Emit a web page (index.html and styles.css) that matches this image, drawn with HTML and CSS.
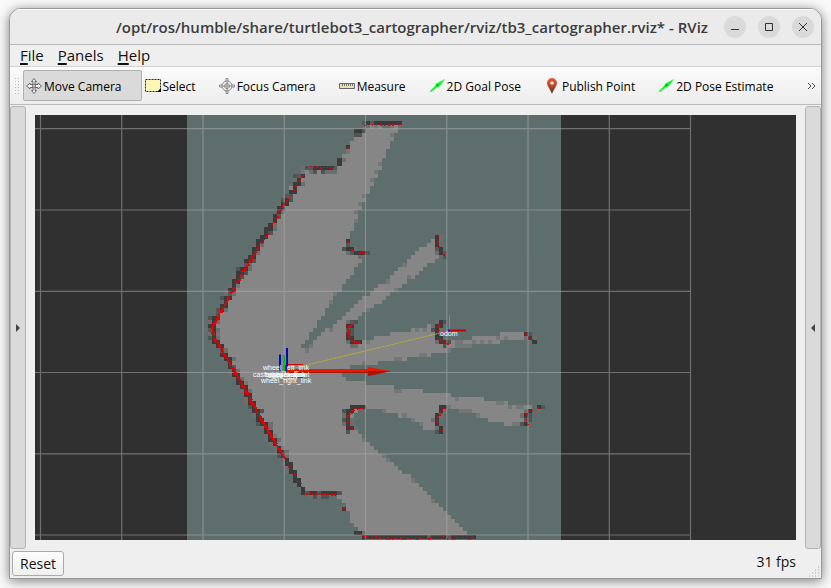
FILE: index.html
```
<!DOCTYPE html>
<html lang="en">
<head>
<meta charset="utf-8">
<title>tb3_cartographer.rviz* - RViz</title>
<link rel="stylesheet" href="styles.css">
</head>
<body>
<div class="window">
  <header class="titlebar">
    <h1 class="title">/opt/ros/humble/share/turtlebot3_cartographer/rviz/tb3_cartographer.rviz* - RViz</h1>
    <div class="controls">
      <button class="control" aria-label="Minimize"><svg viewBox="0 0 22 22"><path d="M7 13.5h8"/></svg></button>
      <button class="control" aria-label="Maximize"><svg viewBox="0 0 22 22"><path d="M7.5 7.5h7v7h-7z"/></svg></button>
      <button class="control" aria-label="Close"><svg viewBox="0 0 22 22"><path d="M7 7l8 8M15 7l-8 8"/></svg></button>
    </div>
  </header>
  <nav class="menubar">
    <button class="menu"><u>F</u>ile</button>
    <button class="menu"><u>P</u>anels</button>
    <button class="menu"><u>H</u>elp</button>
  </nav>
  <div class="toolbar">
    <span class="grip"></span>
    <button class="tool active">
      <svg class="icon" viewBox="0 0 16 16"><path d="M8 .5l2.500 3H9v3h3V5l3.500 3-3.500 3V9.500H9v3h1.500L8 15.500l-2.500-3H7v-3H4V11L.5 8 4 5v1.500h3v-3H5.500z" fill="#f4f4f4" stroke="#666"/><circle cx="8" cy="8" r="1.500" fill="#ddd" stroke="#777"/></svg>
      <span>Move Camera</span></button>
    <button class="tool">
      <svg class="icon" viewBox="0 0 16 16"><rect x=".5" y="1.500" width="15" height="12" fill="#fff6b5" stroke="#222" stroke-dasharray="2 1"/><path d="M16 10v4h-4z" fill="#000"/></svg>
      <span>Select</span></button>
    <button class="tool">
      <svg class="icon" viewBox="0 0 16 16" fill="none" stroke="#888"><circle cx="8" cy="8" r="5"/><circle cx="8" cy="8" r="2.500"/><path d="M7 4V.5h2V4M7 12v3.500h2V12M4 7H.5v2H4M12 7h3.500v2H12M8 4v8M4 8h8"/></svg>
      <span>Focus Camera</span></button>
    <button class="tool">
      <svg class="icon" viewBox="0 0 16 16"><path d="M.5 5.500h15v5H.5z" fill="#ede0b0" stroke="#666"/><path d="M3.500 6v2M5.500 6v2M7.500 6v2M9.500 6v2M11.500 6v2M13.500 6v2" stroke="#777"/></svg>
      <span>Measure</span></button>
    <button class="tool">
      <svg class="icon" viewBox="0 0 16 16"><path d="M.5 13.500L7 7l-.5-1L16 1l-6 8-1-.5-7 5.500z" fill="#0f2"/><path d="M7 7l3-.5-2 2z" fill="#087a18"/></svg>
      <span>2D Goal Pose</span></button>
    <button class="tool">
      <svg class="icon" viewBox="0 0 16 16"><defs><linearGradient id="pin" x2="0" y2="1"><stop offset="0" stop-color="#ec5a3c"/><stop offset=".5" stop-color="#b84a2c"/><stop offset="1" stop-color="#4a2810"/></linearGradient></defs><path d="M8 0a5 5 0 0 0-5 5c0 3.500 3.500 6 5 11 1.500-5 5-7.500 5-11a5 5 0 0 0-5-5z" fill="url(#pin)"/><circle cx="8" cy="5" r="1.600" fill="#fff"/></svg>
      <span>Publish Point</span></button>
    <button class="tool">
      <svg class="icon" viewBox="0 0 16 16"><path d="M.5 13.500L7 7l-.5-1L16 1l-6 8-1-.5-7 5.500z" fill="#0f2"/><path d="M7 7l3-.5-2 2z" fill="#087a18"/></svg>
      <span>2D Pose Estimate</span></button>
    <button class="more" aria-label="More tools"><svg viewBox="0 0 10 8"><path d="M1 1l3 3-3 3M5 1l3 3-3 3"/></svg></button>
  </div>
  <main class="workspace">
    <button class="dock" aria-label="Show left panels"><svg viewBox="0 0 5 8"><path d="M0 0l4 4-4 4z"/></svg></button>
    <svg class="scene" viewBox="35 115 761 425" preserveAspectRatio="xMidYMid slice" role="img" aria-label="Map view">
      <rect x="187" y="115" width="374" height="425" fill="#5e6e6c"/>
      <g id="cells" shape-rendering="crispEdges"></g>
      <path class="gridline" d="M40.500 115V540M121.700 115V540M203 115V540M284.200 115V540M365.500 115V540M446.800 115V540M528 115V540M609.300 115V540M690.500 115V540M35 128.700H691M35 210H691M35 291.300H691M35 372.500H691M35 453.800H691M35 535H691"/>
      <g id="scan" fill="#e80000" shape-rendering="crispEdges"></g>
      <path d="M286 370L440 333" stroke="#b9b52c" stroke-dasharray="2 .6" fill="none"/>
      <path d="M286 369h82v-2l23 4-23 5v-3h-82z" fill="#e61a00"/>
      <path d="M368 371h23l-23 5v-3h-82v-1h82z" fill="#a61404"/>
      <path d="M287 364.500h16M287 377.500h16" stroke="#d80000"/>
      <path d="M284 355v17" stroke="#00c800" stroke-width="2"/>
      <path d="M280 354.500v16M287 348v22" stroke="#0505c4" stroke-width="2"/>
      <path d="M449.500 315v15" stroke="#12d812"/>
      <path d="M450 330.500h16" stroke="#cc0000" stroke-width="2"/>
      <path d="M441 332.500h4" stroke="#f0148c" stroke-width="2"/>
      <path d="M448 330.500h2" stroke="#1111dd" stroke-width="2"/>
      <g class="frames">
        <text x="263" y="370">wheel_left_link</text>
        <text x="253" y="377">caster_back_link</text>
        <text x="265" y="377">base_footprint</text>
        <text x="268" y="378">base_link</text>
        <text x="272" y="377">base_scan</text>
        <text x="261" y="383">wheel_right_link</text>
        <text x="440" y="336">odom</text>
      </g>
      <path d="M286 365v6" stroke="#1818d0" stroke-width="2"/>
    </svg>
    <button class="dock" aria-label="Show right panels"><svg viewBox="0 0 5 8"><path d="M4 0L0 4l4 4z"/></svg></button>
  </main>
  <footer class="statusbar">
    <button class="reset">Reset</button>
    <output class="fps">31 fps</output>
    <svg class="sizegrip" viewBox="0 0 12 12"><path d="M10 1h1M7 4h1M10 4h1M4 7h1M7 7h1M10 7h1M1 10h1M4 10h1M7 10h1M10 10h1" stroke="#aaa"/></svg>
  </footer>
</div>
<script src="map.js"></script>
</body>
</html>
```
FILE: styles.css
```
* { box-sizing: border-box; }
body {
  margin: 0;
  min-height: 100vh;
  padding: 8px 9px 9px;
  display: flex;
  background: #fafafa;
  font-family: "Open Sans", "Noto Sans", sans-serif;
  color: #111;
}
button { font: inherit; color: inherit; border: 0; background: none; padding: 0; }
svg { display: block; }
.window {
  flex: 1;
  min-width: 0;
  display: flex;
  flex-direction: column;
  background: #efefef;
  border: 1px solid #999;
  border-radius: 12px 12px 0 0;
  box-shadow: 0 2px 12px rgba(0, 0, 0, .5);
  overflow: hidden;
}
.titlebar {
  height: 36px;
  flex: none;
  display: flex;
  align-items: center;
  justify-content: flex-end;
  gap: 16px;
  padding-right: 7px;
  background: #ebebeb;
  border-bottom: 1px solid #bbb;
  box-shadow: inset 0 1px #fff;
}
.title { margin: 0; font-size: 15px; font-weight: 600; line-height: 20px; color: #3c3c3c; white-space: nowrap; }
.controls { display: flex; gap: 12px; }
.control { width: 22px; height: 22px; border-radius: 50%; background: #dadada; }
.control svg { width: 22px; height: 22px; fill: none; stroke: #333; }
.menubar { height: 22px; flex: none; display: flex; gap: 14px; padding-left: 10px; border-bottom: 1px solid #d2d2d2; }
.menu { font-size: 15px; line-height: 21px; }
.menu u { text-underline-offset: 2px; text-decoration-thickness: 2px; }
.toolbar {
  height: 38px;
  flex: none;
  display: flex;
  align-items: center;
  padding: 0 4px;
  background: linear-gradient(#fbfbfb, #ededed);
  border-bottom: 1px solid #bbb;
  font-size: 12px;
}
.grip { width: 5px; height: 17px; margin-right: 4px; background: radial-gradient(circle, #bbb 1px, transparent 1px) 0 0 / 3px 3px; }
.tool {
  height: 31px;
  display: flex;
  align-items: center;
  gap: 2px;
  padding: 1px 19px 0 2px;
  border: 1px solid transparent;
  border-radius: 2px;
  white-space: nowrap;
  color: #000;
}
.tool.active { background: #dadada; border-color: #b0b0b0; }
.icon { width: 16px; height: 16px; flex: none; }
.more { margin-left: auto; }
.more svg { width: 10px; height: 8px; fill: none; stroke: #444; }
.workspace { flex: 1; min-height: 0; display: flex; gap: 9px; padding-top: 1px; }
.dock {
  width: 16px;
  flex: none;
  display: flex;
  align-items: center;
  justify-content: center;
  background: #dadada;
  border: 1px solid #b4b4b4;
  border-radius: 3px;
}
.dock svg { width: 5px; height: 8px; fill: #444; }
.scene { flex: 1; min-width: 0; height: calc(100% - 18px); margin-top: 9px; background: #303030; }
.gridline { fill: none; stroke: #b0b0b4; stroke-opacity: .5; stroke-width: 1.2; }
.frames { fill: #fff; font: 7px "Liberation Sans", sans-serif; }
.statusbar { height: 29px; flex: none; display: flex; align-items: center; padding: 0 1px 0 2px; }
.reset {
  height: 25px;
  padding: 0 7px;
  font-size: 14px;
  border: 1px solid #aaa;
  border-radius: 3px;
  background: linear-gradient(#fdfdfd, #f0f0f0);
}
.fps { margin-left: auto; font-size: 14px; padding: 0 12px 5px 0; }
.sizegrip { width: 12px; height: 12px; align-self: flex-end; }
```
FILE: map.js
```
// Occupancy grid: free space is rasterised to square cells, walls are traced over it.
const CELL = 4.062, X0 = 187.2, Y0 = 112.9;
const FREE = [
  [[362,125],[400,125],[394,137],[390,148],[382,164],[374,182],[366,198],[357,218],[349,240],[353,254],[366,256],[357,267],[333,300],[300,351],
   [310,346],[345,314],[370,292],[390,279],[413,253],[437,238],[443,254],[410,280],[367,312],[353,320],[349,330],[353,341],[363,341],[397,333],[437,324],
   [441,340],[448,343],[483,336],[527,332],[530,338],[480,345],[450,351],[413,358],[377,363],[342,368],[340,376],[350,381],[378,385],[407,389],[435,393],
   [463,397],[490,400],[517,405],[531,407],[525,425],[505,424],[490,421],[473,415],[447,409],[440,415],[438,429],[427,429],[407,418],[393,413],[363,408],
   [353,417],[349,429],[357,432],[366,441],[383,455],[420,485],[443,510],[473,538],[362,538],[362,532],[353,527],[346,507],[337,495],[303,493],[283,455],
   [258,410],[211,329],[240,274],[283,200],[303,168],[337,168],[348,147]]
];
// [points, spacing of laser returns]
const WALLS = [
  [[[364,124],[400,124]], 4], [[[354,131],[358,131]], 6], [[[347,147],[347,147]], 6], [[[339,160],[339,163]], 5],
  [[[306,167],[335,167]], 3.5], [[[303,174],[290,195],[281,208],[272,223],[257,248]], 3.5],
  [[[257,248],[240,275],[211,328],[214,338],[233,369],[247,394]], 1],
  [[[247,394],[262,421],[283,457]], .9], [[[285,459],[302,488]], 4],
  [[[304,493],[335,493]], 2.5], [[[343,507],[343,507]], 6], [[[355,532],[358,532]], 6], [[[363,537],[474,537]], 4],
  [[[348,240],[348,246],[354,252],[364,252]], 3],
  [[[352,323],[348,326],[348,339],[353,341],[360,341]], 1.6],
  [[[438,236],[438,246],[444,254]], 5],
  [[[440,324],[438,328],[438,336],[441,341],[447,343]], 3],
  [[[526,333],[533,341]], 4],
  [[[363,407],[353,409],[347,415],[347,423],[351,428]], 2],
  [[[445,407],[437,416],[437,423]], 3], [[[441,429],[441,433]], 6],
  [[[537,407],[537,407]], 5], [[[531,411],[531,411]], 5], [[[527,415],[527,424]], 4]
];
const cells = new Map(), marks = [];
const noise = (a, b) => { const v = Math.sin(a * 127.1 + b * 311.7) * 43758.5453; return v - Math.floor(v); };
function inside(x, y, p) {
  let hit = false;
  for (let i = 0, j = p.length - 1; i < p.length; j = i++) {
    const [ax, ay] = p[i], [bx, by] = p[j];
    if ((ay > y) !== (by > y) && x < (bx - ax) * (y - ay) / (by - ay) + ax) hit = !hit;
  }
  return hit;
}
const isFree = (c, r) => FREE.some(p => inside(X0 + (c + .5) * CELL, Y0 + (r + .5) * CELL, p));
for (let r = 0; r < 106; r++) for (let c = 0; c < 92; c++) {
  if (!isFree(c, r)) continue;
  const edge = !isFree(c - 1, r) || !isFree(c + 1, r) || !isFree(c, r - 1) || !isFree(c, r + 1);
  cells.set(c + "," + r, edge && noise(c, r) > .82 ? "#747776" : "#868686");
}
const walls = new Set();
for (const [pts, gap] of WALLS) {
  let travelled = 0, next = 0;
  for (let i = 0; i < pts.length - 1; i++) {
    const [ax, ay] = pts[i], [bx, by] = pts[i + 1], len = Math.hypot(bx - ax, by - ay);
    for (let t = 0; t <= len; t += .5) {
      const k = len ? t / len : 0, x = ax + (bx - ax) * k, y = ay + (by - ay) * k;
      walls.add(Math.floor((x - X0) / CELL) + "," + Math.floor((y - Y0) / CELL));
      if (travelled + t >= next) {
        marks.push([x + noise(x, y) * 1.6 - .8, y + noise(y, x) * 1.6 - .8]);
        next += gap;
      }
    }
    travelled += len;
  }
}
for (const key of walls) {
  const [c, r] = key.split(",").map(Number);
  for (const [dc, dr] of [[1, 0], [-1, 0], [0, 1]]) {
    const n = noise(c + dc * 3, r + dr * 5);
    if (n > .6) cells.set((c + dc) + "," + (r + dr), n > .88 ? "#505453" : "#6b6e6d");
  }
}
for (const key of walls) {
  const [c, r] = key.split(",").map(Number);
  cells.set(key, noise(c, r) > .88 ? "#565858" : "#3a3a3a");
}
const ns = "http://www.w3.org/2000/svg";
function draw(parent, x, y, w, h, fill) {
  const el = document.createElementNS(ns, "rect");
  for (const [k, v] of Object.entries({ x, y, width: w, height: h })) el.setAttribute(k, v);
  if (fill) el.setAttribute("fill", fill);
  parent.append(el);
}
const layer = document.getElementById("cells"), scan = document.getElementById("scan");
for (const [key, fill] of cells) {
  const [c, r] = key.split(",").map(Number);
  draw(layer, X0 + c * CELL, Y0 + r * CELL, CELL, CELL, fill);
}
for (const [x, y] of marks) draw(scan, Math.round(x), Math.round(y), noise(x, y) > .3 ? 2 : 1, noise(y, x) > .5 ? 2 : 1);
```
